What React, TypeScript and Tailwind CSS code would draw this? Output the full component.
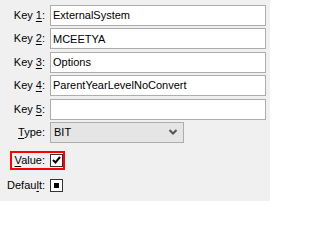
const font = { fontFamily: '"Liberation Sans", Arial, sans-serif' };

const Label = ({ pre, u, post }: { pre: string; u: string; post: string }) => (
  <span className="text-right text-[11px] leading-none text-black">
    {pre}
    <span className="underline underline-offset-2">{u}</span>
    {post}
  </span>
);

const keys = ["ExternalSystem", "MCEETYA", "Options", "ParentYearLevelNoConvert", ""];

export default function App() {
  return (
    <div
      className="w-[270px] h-[201px] bg-[#f0f0f0] pt-[5px] pr-[4px] overflow-hidden"
      style={font}
    >
      <div className="grid grid-cols-[45px_1fr] gap-x-[5px] gap-y-[2.4px] items-center">
        {keys.map((v, i) => (
          <div key={i} className="contents">
            <Label pre="Key " u={String(i + 1)} post=":" />
            <div className="h-[21px] border border-[#adadad] bg-white flex items-center px-[2px] text-[11px] text-black">
              {v}
            </div>
          </div>
        ))}
        <Label pre="" u="T" post="ype:" />
        <div className="w-[134px] h-[21px] border border-[#adadad] bg-[#e5e5e5] flex items-center justify-between pl-[3px] pr-[6px] text-[11px] text-black">
          <span>BIT</span>
          <svg width="8" height="6" viewBox="0 0 8 6">
            <path d="M0.5 1 L4 4.5 L7.5 1" stroke="#555" strokeWidth="2" fill="none" />
          </svg>
        </div>
      </div>
      <div className="grid grid-cols-[45px_1fr] gap-x-[5px] mt-[11px] items-center">
        <div className="relative col-span-2 grid grid-cols-[45px_1fr] gap-x-[5px] items-center">
          <Label pre="" u="V" post="alue:" />
          <div className="w-[13px] h-[13px] border border-[#333] bg-white flex items-center justify-center">
            <svg width="9" height="8" viewBox="0 0 9 8">
              <path d="M1 4 L3.5 6.5 L8 1" stroke="#000" strokeWidth="2" fill="none" />
            </svg>
          </div>
          <div className="absolute left-[10px] top-[-3px] w-[55px] h-[19px] border-2 border-[#ff0000]" />
        </div>
      </div>
      <div className="grid grid-cols-[45px_1fr] gap-x-[5px] mt-[12px] items-center">
        <Label pre="Defau" u="l" post="t:" />
        <div className="w-[13px] h-[13px] border border-[#333] bg-white flex items-center justify-center">
          <div className="w-[5px] h-[5px] bg-black" />
        </div>
      </div>
    </div>
  );
}
